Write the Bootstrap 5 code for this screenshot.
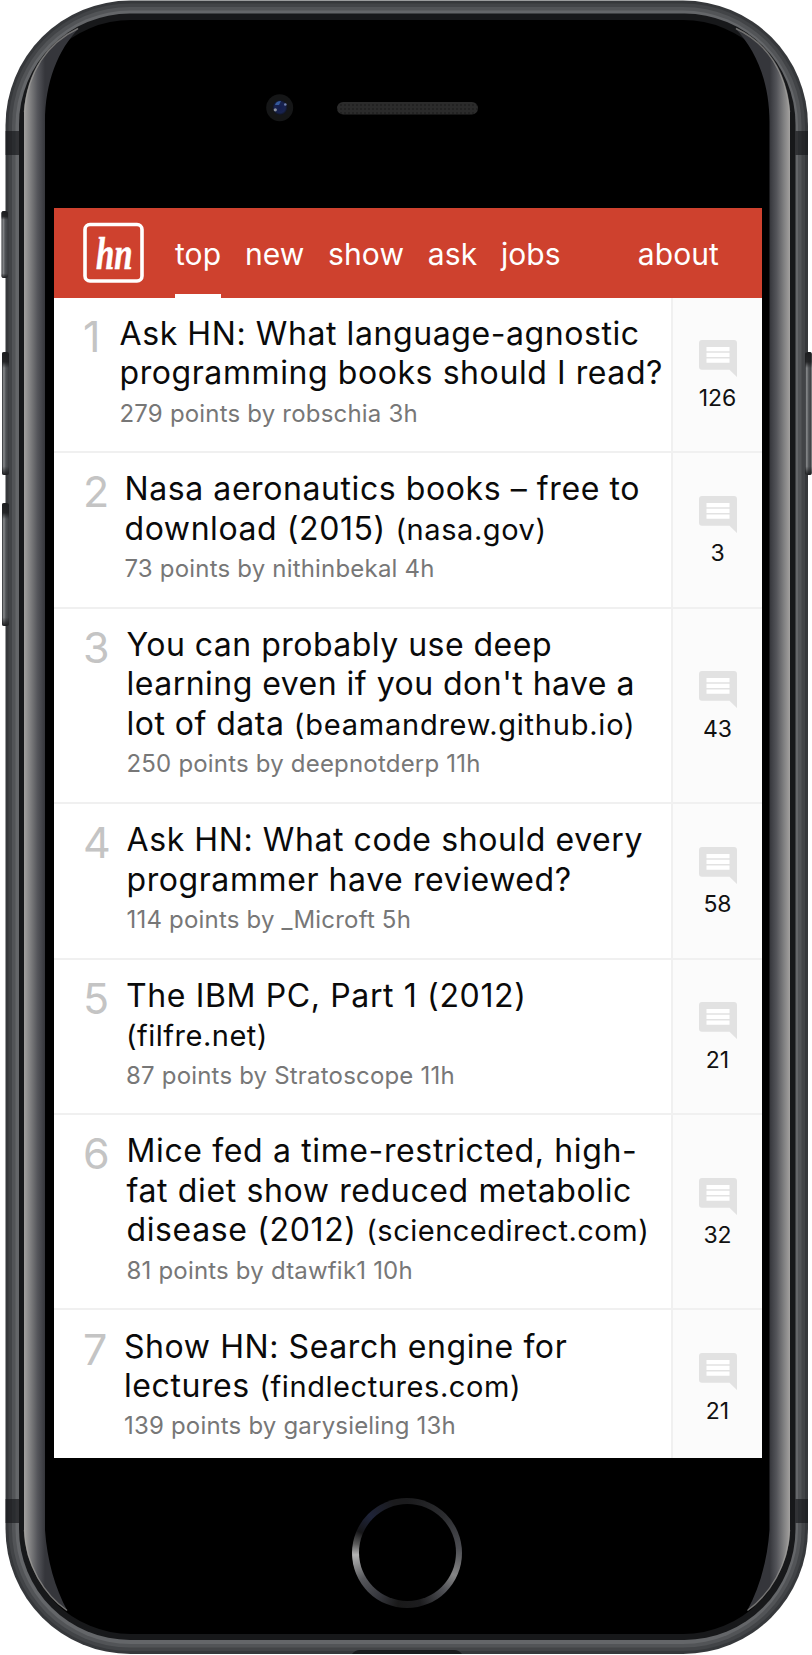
<!DOCTYPE html>
<html lang="en">
<head>
<meta charset="utf-8">
<meta name="viewport" content="width=device-width, initial-scale=1">
<title>Hacker News reader</title>
<link rel="stylesheet" href="https://cdn.jsdelivr.net/npm/bootstrap@5.3.0/dist/css/bootstrap.min.css">
<style>
  body { background: #fff; font-family: Inter, "Liberation Sans", sans-serif; }
  .phone { width: 812px; height: 1655px; padding: 208px 50px 0 54px; }
  .shell { top: 0; left: 0; }
  .screen { height: 1250px; background: #fff; }
  .topbar { height: 89.6px; background: #ce412e; padding: 0 43px 0 29px; }
  .tab-link { color: #fff; font-size: 30px; letter-spacing: .1px; line-height: 89px; padding-top: 2px; height: 89.6px; border-bottom: 4px solid transparent; text-decoration: none; }
  .tab-link.active { border-bottom-color: #fff; }
  .tabs { margin-left: 31px; gap: 23.7px; }
  .story { border-bottom: 2px solid #f0f0f0; line-height: 39.4px; padding: 0; }
  .story-main { height: 153.6px; padding: 16.2px 0 0 30px; }
  .story.tall .story-main { height: 193.2px; }
  .rank { width: var(--rank-w, 42.5px); font-size: 43px; font-weight: 400; color: #c4c4c4; line-height: 44px; letter-spacing: -1px; margin-left: -1px; margin-right: 1px; }
  .headline { font-size: 32px; letter-spacing: .58px; color: #0a0a0a; }
  .loose .headline { letter-spacing: .63px; }
  .snug .headline { letter-spacing: .48px; }
  .domain { font-size: 29px; letter-spacing: .58px; line-height: 30px; }
  .loose .domain { letter-spacing: .5px; }
  .snug .domain { letter-spacing: .77px; }
  .meta { font-size: 24px; letter-spacing: .19px; color: #777; line-height: 38px; margin-top: 2px; }
  .talk { width: 91px; background: #fbfbfb; border-left: 2px solid #f0f0f0; font-size: 23px; color: #111; padding-top: 3.5px; padding-left: 1px; }
  .talk-count { line-height: 28px; margin-top: 6.5px; margin-right: 1px; }
  .home { width: 110px; height: 110px; padding: 6.5px; margin-top: 39.5px; left: -1px;
    background: conic-gradient(#1b1b1d 0, #2b2c2f 45deg, #4c4d52 85deg, #858585 115deg, #505156 135deg, #1c1c1e 165deg, #191919 190deg, #34353b 212deg, #56575b 240deg, #b4b4b4 268deg, #5a5a5a 280deg, #161618 294deg, #1e2338 315deg, #1b1b1d 345deg, #1b1b1d 360deg); }
</style>
</head>
<body>
<div class="phone position-relative overflow-hidden">
  <svg class="shell position-absolute" width="812" height="1655" viewBox="0 0 812 1655" aria-hidden="true">
    <defs>
      <linearGradient id="glassL" gradientUnits="userSpaceOnUse" x1="24" y1="0" x2="45" y2="0"><stop offset="0" stop-color="#a3a19f"/><stop offset=".3" stop-color="#808081"/><stop offset=".65" stop-color="#54555a"/><stop offset="1" stop-color="#35363b"/></linearGradient>
      <linearGradient id="glassR" gradientUnits="userSpaceOnUse" x1="790" y1="0" x2="769.5" y2="0"><stop offset="0" stop-color="#a3a19f"/><stop offset=".3" stop-color="#808081"/><stop offset=".65" stop-color="#54555a"/><stop offset="1" stop-color="#35363b"/></linearGradient>
      <linearGradient id="key"><stop offset="0" stop-color="#2a2c2f"/><stop offset=".25" stop-color="#8a8c8e"/><stop offset=".55" stop-color="#505356"/><stop offset="1" stop-color="#3a3c3f"/></linearGradient>
      <linearGradient id="cap" x1="0" y1="0" x2="0" y2="1"><stop offset="0" stop-color="#1d1e20"/><stop offset=".08" stop-color="#1d1e20" stop-opacity=".9"/><stop offset=".13" stop-color="#1d1e20" stop-opacity="0"/><stop offset=".93" stop-color="#1d1e20" stop-opacity="0"/><stop offset="1" stop-color="#1d1e20"/></linearGradient>
      <radialGradient id="lens"><stop offset="0" stop-color="#141d4c"/><stop offset=".7" stop-color="#182350"/><stop offset="1" stop-color="#10131d"/></radialGradient>
      <pattern id="mesh" width="4" height="4" patternUnits="userSpaceOnUse"><path fill="#2b2b2b" d="M0 0h4v4H0z"/><path fill="#222" d="M0 0h2v2H0z"/></pattern>
    </defs>
    <rect x="5.500" y=".5" width="802.500" height="1653.500" rx="125" fill="#36383b"/>
    <rect x="8.500" y="3.500" width="796.500" height="1647.500" rx="122" fill="#424447"/>
    <rect x="12" y="7" width="789.500" height="1640.500" rx="118" fill="#525457"/>
    <rect x="15.500" y="10.500" width="782.500" height="1633.500" rx="115" fill="#646669"/>
    <path d="M5.500 131H19v24H5.500zM795.500 131h12.500v24h-12.500zM5.500 1499H19v24H5.500zM795.500 1499h12.500v24h-12.500z" fill="#15171a" opacity=".65"/>
    <g fill="url(#key)">
      <rect x="1.500" y="211" width="6.500" height="67" rx="2"/>
      <rect x="2" y="352" width="7" height="123" rx="2"/>
      <rect x="2" y="503" width="7" height="123" rx="2"/>
      <rect x="805" y="352" width="6.700" height="123" rx="2"/>
    </g>
    <g fill="url(#cap)">
      <rect x="1.500" y="211" width="6.500" height="67" rx="2"/>
      <rect x="2" y="352" width="7" height="123" rx="2"/>
      <rect x="2" y="503" width="7" height="123" rx="2"/>
      <rect x="805" y="352" width="6.700" height="123" rx="2"/>
    </g>
    <rect x="19" y="13.500" width="776.500" height="1626.500" rx="111" fill="#17181a"/>
    <rect x="24" y="20" width="766" height="1614" rx="107" fill="#000"/>
    <path d="M24 112C27 72 47 43 79 28C58 50 45 82 45 122V1530C47 1560 55 1588 67.500 1611C44 1595 25 1565 24 1530z" fill="url(#glassL)"/>
    <path d="M790 112C787 72 767 43 735 28C756 50 769.500 82 769.500 122V1530C767.500 1560 759.500 1588 747 1611C770 1595 789 1565 790 1530z" fill="url(#glassR)"/>
    <path d="M24.500 112C27.500 72 47 43 78 28.500M24.500 1530C25.500 1565 44.500 1595 67 1610.500M789.500 112C786.500 72 767 43 736 28.500M789.500 1530C788.500 1565 769.500 1595 747.500 1610.500" fill="none" stroke="#a3a19f" stroke-opacity=".6" stroke-width="1.500"/>
    <path d="M352 1654q3-4 8-4h94q5 0 8 4z" fill="#1b1c1e"/>
    <circle cx="279.700" cy="107.700" r="13.500" fill="#151617"/>
    <circle cx="280" cy="107.500" r="7.500" fill="url(#lens)"/>
    <path d="M275 105q1-4 6-4l-2 4z" fill="#35599b"/>
    <circle cx="275.300" cy="109.800" r="1.600" fill="#8c919d"/><circle cx="285.300" cy="104.500" r="1.300" fill="#6f7fae"/>
    <rect x="337" y="102" width="141" height="12.500" rx="6.200" fill="url(#mesh)"/>
    <symbol id="bubble" viewBox="0 0 38 37"><path fill="#e2e2e2" d="M3 0h32q3 0 3 3v34l-7.500-7.300H3q-3 0-3-3V3q0-3 3-3z"/><path fill="#fff" d="M7.500 7h23v4.200h-23zM7.500 12.800h23V17h-23zM7.500 18.600h23v4.200h-23z"/></symbol>
  </svg>

  <main class="screen position-relative overflow-hidden">
    <nav class="topbar d-flex align-items-center">
      <a href="#" class="d-flex" aria-label="Home">
        <svg width="61" height="61" viewBox="0 0 61 61">
          <rect x="2" y="2.500" width="57" height="56.500" rx="5" fill="none" stroke="#fff" stroke-width="3.600"/>
          <text transform="translate(13 47) scale(.7 1)" font-family="'Liberation Serif', serif" font-size="47" font-weight="bold" font-style="italic" fill="#fff" stroke="#fff" stroke-width=".6">hn</text>
        </svg>
      </a>
      <div class="tabs d-flex">
        <a href="#" class="tab-link active">top</a>
        <a href="#" class="tab-link">new</a>
        <a href="#" class="tab-link">show</a>
        <a href="#" class="tab-link">ask</a>
        <a href="#" class="tab-link">jobs</a>
      </div>
      <a href="#" class="tab-link ms-auto">about</a>
    </nav>

    <ol class="list-unstyled m-0">
      <li class="story d-flex">
        <div class="story-main d-flex flex-grow-1" style="--rank-w:35.500px">
          <div class="rank">1</div>
          <div class="text-nowrap"><div class="headline">Ask HN: What language-agnostic<br>programming books should I read?</div><div class="meta">279 points by robschia 3h</div></div>
        </div>
        <div class="talk d-flex flex-column align-items-center justify-content-center"><svg width="38" height="37"><use href="#bubble"/></svg><div class="talk-count">126</div></div>
      </li>
      <li class="story d-flex">
        <div class="story-main d-flex flex-grow-1" style="--rank-w:40.500px">
          <div class="rank">2</div>
          <div class="text-nowrap"><div class="headline">Nasa aeronautics books – free to<br>download (2015) <span class="domain">(nasa.gov)</span></div><div class="meta">73 points by nithinbekal 4h</div></div>
        </div>
        <div class="talk d-flex flex-column align-items-center justify-content-center"><svg width="38" height="37"><use href="#bubble"/></svg><div class="talk-count">3</div></div>
      </li>
      <li class="story tall snug d-flex">
        <div class="story-main d-flex flex-grow-1">
          <div class="rank">3</div>
          <div class="text-nowrap"><div class="headline">You can probably use deep<br>learning even if you don't have a<br>lot of data <span class="domain">(beamandrew.github.io)</span></div><div class="meta">250 points by deepnotderp 11h</div></div>
        </div>
        <div class="talk d-flex flex-column align-items-center justify-content-center"><svg width="38" height="37"><use href="#bubble"/></svg><div class="talk-count">43</div></div>
      </li>
      <li class="story d-flex">
        <div class="story-main d-flex flex-grow-1">
          <div class="rank">4</div>
          <div class="text-nowrap"><div class="headline">Ask HN: What code should every<br>programmer have reviewed?</div><div class="meta">114 points by _Microft 5h</div></div>
        </div>
        <div class="talk d-flex flex-column align-items-center justify-content-center"><svg width="38" height="37"><use href="#bubble"/></svg><div class="talk-count">58</div></div>
      </li>
      <li class="story loose d-flex">
        <div class="story-main d-flex flex-grow-1" style="--rank-w:42px">
          <div class="rank">5</div>
          <div class="text-nowrap"><div class="headline">The IBM PC, Part 1 (2012)<br><span class="domain">(filfre.net)</span></div><div class="meta">87 points by Stratoscope 11h</div></div>
        </div>
        <div class="talk d-flex flex-column align-items-center justify-content-center"><svg width="38" height="37"><use href="#bubble"/></svg><div class="talk-count">21</div></div>
      </li>
      <li class="story tall loose d-flex">
        <div class="story-main d-flex flex-grow-1">
          <div class="rank">6</div>
          <div class="text-nowrap"><div class="headline">Mice fed a time-restricted, high-<br>fat diet show reduced metabolic<br>disease (2012) <span class="domain">(sciencedirect.com)</span></div><div class="meta">81 points by dtawfik1 10h</div></div>
        </div>
        <div class="talk d-flex flex-column align-items-center justify-content-center"><svg width="38" height="37"><use href="#bubble"/></svg><div class="talk-count">32</div></div>
      </li>
      <li class="story d-flex">
        <div class="story-main d-flex flex-grow-1" style="--rank-w:40px">
          <div class="rank">7</div>
          <div class="text-nowrap"><div class="headline">Show HN: Search engine for<br>lectures <span class="domain">(findlectures.com)</span></div><div class="meta">139 points by garysieling 13h</div></div>
        </div>
        <div class="talk d-flex flex-column align-items-center justify-content-center"><svg width="38" height="37"><use href="#bubble"/></svg><div class="talk-count">21</div></div>
      </li>
    </ol>
  </main>

  <div class="home position-relative rounded-circle mx-auto"><div class="w-100 h-100 rounded-circle bg-black"></div></div>
</div>
<script src="https://cdn.jsdelivr.net/npm/bootstrap@5.3.0/dist/js/bootstrap.bundle.min.js"></script>
</body>
</html>
